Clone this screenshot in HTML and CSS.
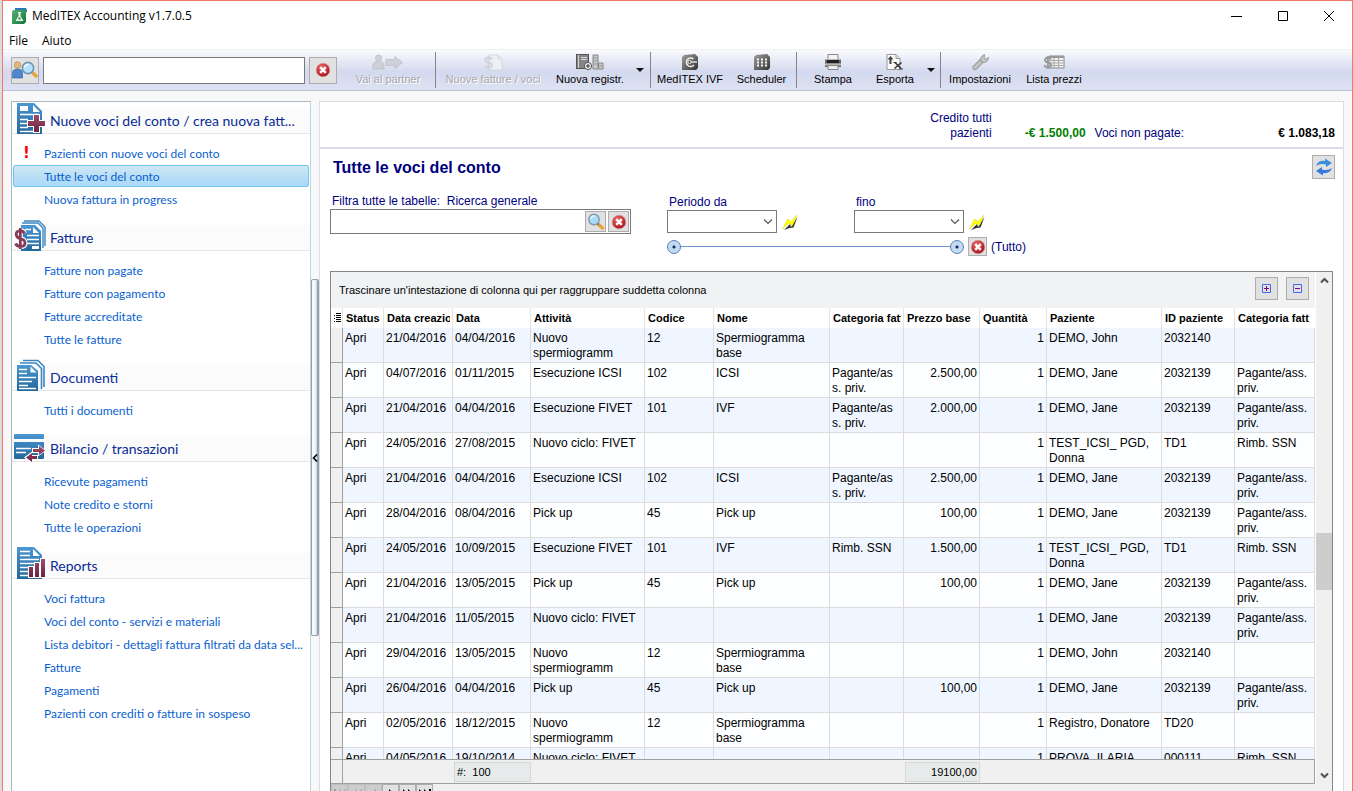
FILE: index.html
```html
<!DOCTYPE html>
<html lang="it">

<head>
    <meta charset="UTF-8">
    <meta name="viewport" content="width=device-width, initial-scale=1.0">
    <title>MedITEX Accounting v1.7.0.5</title>
    <link rel="stylesheet" href="styles.css">
</head>

<body>
    <svg width="0" height="0" class="defs">
        <defs>
            <linearGradient id="blue" x1="0" y1="0" x2="0" y2="1">
                <stop offset="0" stop-color="#4a97d2" />
                <stop offset="1" stop-color="#22679c" />
            </linearGradient>
            <linearGradient id="wine" x1="0" y1="0" x2="0" y2="1">
                <stop offset="0" stop-color="#a04c6c" />
                <stop offset="1" stop-color="#6c2440" />
            </linearGradient>
            <linearGradient id="gray" x1="0" y1="0" x2="1" y2="1">
                <stop offset="0" stop-color="#a0a0a0" />
                <stop offset="1" stop-color="#333" />
            </linearGradient>
            <linearGradient id="green" x1="0" y1="0" x2="1" y2="1">
                <stop offset="0" stop-color="#5fae74" />
                <stop offset="1" stop-color="#0d7a3a" />
            </linearGradient>
            <radialGradient id="red" cx="0.4" cy="0.3" r="0.7">
                <stop offset="0" stop-color="#ee6a6a" />
                <stop offset="1" stop-color="#b01018" />
            </radialGradient>
            <symbol id="i-cancel" viewBox="0 0 16 16">
                <circle cx="8" cy="8" r="6.8" fill="url(#red)" stroke="#c8a0a0" stroke-width="0.6" />
                <path d="M5.2 5.2l5.6 5.6M10.8 5.2l-5.6 5.6" stroke="#fff" stroke-width="2.4" />
            </symbol>
            <symbol id="i-search" viewBox="0 0 18 18">
                <path d="M11 11l4.500 4" stroke="#e8a33c" stroke-width="3.400" stroke-linecap="round" />
                <path d="M10 10l2 2" stroke="#888" stroke-width="2" />
                <circle cx="7" cy="6.500" r="5.200" fill="#a9dcf8" stroke="#8098ac" stroke-width="1.400" />
                <path d="M3.800 6a3.400 3.400 0 0 1 4-3" fill="none" stroke="#e8f8ff" stroke-width="1.400" />
            </symbol>
            <symbol id="i-flash" viewBox="0 0 16 16">
                <path d="M2 16l6-6 1 3 6.500-10-4 10.500-4 .5z" fill="#333" />
                <path d="M0.500 15L5.500 5l3.500 2.500L15 1l-4.500 10.500L6.500 9.500z" fill="#ffff00" stroke="#d0d000" stroke-width="0.400" />
            </symbol>
            <symbol id="i-chevron" viewBox="0 0 10 6">
                <path d="M1 0.500l4 4 4-4" fill="none" stroke="#555" stroke-width="1.200" />
            </symbol>
        </defs>
    </svg>

    <div class="window">
        <header class="titlebar">
            <svg class="app-icon" viewBox="0 0 16 16">
                <path d="M4 0h11l1 2v2H4z" fill="#2f78b8" />
                <path d="M2 2h13v12l-2 2H1V4z" fill="url(#green)" />
                <path d="M7 4h3v1l-.5.500v2.500l3 5H4.500l3-5V5.500L7 5z" fill="#e6f4ea" />
                <circle cx="8.500" cy="10.500" r="1.200" fill="#3f9459" />
            </svg>
            <span class="caption">MedITEX Accounting v1.7.0.5</span>
            <button class="win-btn" aria-label="Riduci"><svg viewBox="0 0 12 12"><path d="M0 6.500h11" /></svg></button>
            <button class="win-btn" aria-label="Ingrandisci"><svg viewBox="0 0 12 12"><path d="M1.500 1.500h9v9h-9z" /></svg></button>
            <button class="win-btn" aria-label="Chiudi"><svg viewBox="0 0 12 12"><path d="M1 1l10 10M11 1L1 11" /></svg></button>
        </header>

        <nav class="menubar">
            <a href="#">File</a>
            <a href="#">Aiuto</a>
        </nav>

        <div class="toolbar">
            <div class="patient-search">
                <button class="face" aria-label="Cerca paziente">
                    <svg width="26" height="18" viewBox="0 0 26 18">
                        <circle cx="5.500" cy="4" r="3.200" fill="#e8b878" stroke="#a08050" stroke-width="0.600" />
                        <path d="M0.500 17v-5q0-4 5-4t5 4v5z" fill="#4f86cc" stroke="#3060a0" stroke-width="0.600" />
                        <path d="M20 11l4 4" stroke="#e8a33c" stroke-width="3.400" stroke-linecap="round" />
                        <circle cx="16" cy="7" r="5.600" fill="#b4e2fa" stroke="#6f94b0" stroke-width="1.600" />
                        <path d="M12.800 6.500a3.400 3.400 0 0 1 4-3" fill="none" stroke="#fff" stroke-width="1.400" />
                    </svg>
                </button>
                <input type="text" aria-label="Paziente">
                <button class="face" aria-label="Cancella"><svg width="16" height="16"><use href="#i-cancel" /></svg></button>
            </div>
            <button class="tool partner" disabled>
                <svg width="32" height="17" viewBox="0 0 32 17">
                    <g fill="#cfd1d8" stroke="#b9bcc6" stroke-width="0.800">
                        <circle cx="6.500" cy="4" r="3" />
                        <path d="M1 15V11q0-3.500 5.500-3.500T12 11v4z" />
                        <path d="M14 5.500h9v-3l7.500 6-7.500 6v-3h-9z" />
                    </g>
                </svg>
                Vai al partner
            </button>
            <span class="sep"></span>
            <button class="tool invoices" disabled>
                <svg width="20" height="17" viewBox="0 0 20 17">
                    <path d="M6 1h9l4 4v11H6z" fill="#eef0f6" stroke="#d4d7e0" />
                    <path d="M15 1v4h4" fill="none" stroke="#d4d7e0" />
                    <path d="M9 5.500Q8 3.500 5.500 3.700 2 4 2.200 6.300q.3 1.700 3.300 2.200 3.500.5 3.500 2.800 0 2.200-3.500 2.200-3 0-3.800-2M5.500 2v13" fill="none" stroke="#d2d4dc" stroke-width="2" />
                </svg>
                Nuove fatture / voci
            </button>
            <button class="tool record">
                <svg width="28" height="17" viewBox="0 0 28 17">
                    <rect x="0.500" y="0.500" width="12" height="14" fill="#858585" stroke="#555" />
                    <path d="M2.500 1v13" stroke="#d0d0d0" />
                    <path d="M5 3.500h6M5 5.500h6" stroke="#ddd" />
                    <path d="M17 1h5v14h-5zM22.500 9h4.500v6h-4.500z" fill="#c9c9c9" stroke="#888" />
                    <path d="M17 4h5M17 7h5M17 10h5M23 12h4" stroke="#999" />
                    <circle cx="12" cy="12" r="3.600" fill="#eee" stroke="#555" />
                    <path d="M12 10v4M10 12h4" stroke="#333" />
                </svg>
                Nuova registr.
            </button>
            <button class="drop" aria-label="Altre registrazioni"></button>
            <span class="sep"></span>
            <button class="tool ivf">
                <svg width="16" height="16" viewBox="0 0 16 16">
                    <path d="M2 1l11-1 3 3v11l-2 2H0V3z" fill="url(#gray)" />
                    <path d="M11.500 5A4.300 4.300 0 1 0 12 11" fill="none" stroke="#eee" stroke-width="1.500" />
                    <path d="M7 8h8" stroke="#eee" stroke-width="1.300" />
                    <circle cx="7.500" cy="8" r="1.600" fill="#444" stroke="#eee" />
                </svg>
                MedITEX IVF
            </button>
            <button class="tool scheduler">
                <svg width="16" height="16" viewBox="0 0 16 16">
                    <path d="M2 1l11-1 3 3v11l-2 2H0V3z" fill="url(#gray)" />
                    <path d="M3 5.500h2M7 5.500h2M11 5.500h2M3 8.500h2M7 8.500h2M11 8.500h2M3 11.500h2M7 11.500h2M11 11.500h2" stroke="#f2f2f2" stroke-width="2" />
                </svg>
                Scheduler
            </button>
            <span class="sep"></span>
            <button class="tool print">
                <svg width="18" height="16" viewBox="0 0 18 16">
                    <path d="M4 0.500h10V6H4z" fill="#f4f4f4" stroke="#888" />
                    <path d="M1 5.500h2V8h12V5.500h2V13H1z" fill="#6a6a6a" />
                    <path d="M3 6h12v3H3z" fill="#222" />
                    <path d="M1 9.500h16v2H1z" fill="#b8b8b8" />
                    <path d="M4 11.500h10v4H4z" fill="#eee" stroke="#888" />
                </svg>
                Stampa
            </button>
            <button class="tool export">
                <svg width="18" height="16" viewBox="0 0 18 16">
                    <path d="M1 0.500h9l4 4v11H1z" fill="#fafafa" stroke="#999" />
                    <path d="M10 0.500v4h4" fill="#ddd" stroke="#999" />
                    <path d="M4.500 10V5" stroke="#444" stroke-width="2" />
                    <path d="M1.500 5.500L4.500 2l3 3.500z" fill="#444" />
                    <path d="M9 8.500l6 6M15.500 8.500l-7 6" stroke="#333" stroke-width="1.600" />
                    <path d="M7.500 8.500h3M13 15h4" stroke="#333" />
                </svg>
                Esporta
            </button>
            <button class="drop last" aria-label="Altre esportazioni"></button>
            <span class="sep"></span>
            <button class="tool settings">
                <svg width="17" height="16" viewBox="0 0 17 16">
                    <path d="M3 13.500L9.500 7" stroke="#888" stroke-width="5" stroke-linecap="round" />
                    <path d="M3 13.500L9.500 7" stroke="#c4c4c4" stroke-width="3.400" stroke-linecap="round" />
                    <path d="M9 7Q8 2.500 12.500 0.500L12 4l2 1.200 2.500-1.700Q16 8.500 11 8.500z" fill="#c8c8c8" stroke="#888" stroke-width="0.800" />
                </svg>
                Impostazioni
            </button>
            <button class="tool prices">
                <svg width="22" height="16" viewBox="0 0 22 16">
                    <path d="M6 2h15v12H6z" fill="#f2f2f2" stroke="#888" />
                    <path d="M6 3h15" stroke="#999" stroke-width="2" />
                    <path d="M7 6.500h13M7 9h13M7 11.500h13M11 4v10M15.500 4v10" stroke="#aaa" />
                    <path d="M8 5.500Q7 3.500 4.800 3.700 2 4 2 6.100 2.200 8 4.800 8.500 8 9 8 11.200 8 13.300 4.800 13.300 2 13.300 1.200 11M4.800 2v13" fill="none" stroke="#999" stroke-width="1.800" />
                </svg>
                Lista prezzi
            </button>
        </div>

        <div class="workspace">
            <aside class="sidebar">
                <section>
                    <h2>
                        <svg viewBox="0 0 32 32">
                            <path d="M3 1h17l8 8v23H3z" fill="url(#blue)" />
                            <path d="M6 4h8v5H6zM19 3v7h7z" fill="#fff" />
                            <path d="M6 12.500h19M6 17.500h8M6 21.500h7M6 25.500h8M6 29.500h19" stroke="#fff" stroke-width="1.600" />
                            <path d="M19 12h7v6h6v7h-6v6h-7v-6h-6v-7h6z" fill="#fff" />
                            <path d="M20 13h5v6h6v5h-6v6h-5v-6h-6v-5h6z" fill="url(#wine)" />
                        </svg>
                        <span>Nuove voci del conto / crea nuova fatt...</span>
                    </h2>
                    <ul>
                        <li><a href="#"><b class="alert">!</b>Pazienti con nuove voci del conto</a></li>
                        <li><a href="#" class="selected">Tutte le voci del conto</a></li>
                        <li><a href="#">Nuova fattura in progress</a></li>
                    </ul>
                </section>
                <section>
                    <h2>
                        <svg viewBox="0 0 32 32">
                            <path d="M10 2h15l6 6v19M8 4h16l5 5v20" fill="none" stroke="#3c86c0" stroke-width="1.400" />
                            <path d="M7 6h14l6 6v20H7z" fill="url(#blue)" />
                            <path d="M19 8v6h6z" fill="#fff" />
                            <path d="M11 10.500h6M13 16.500h12M13 20.500h12M13 24.500h12" stroke="#fff" stroke-width="1.600" />
                            <path d="M18 27h7v3h-7z" fill="#fff" />
                            <path d="M10.500 14.500Q9 11.500 6 11.800 2 12 2.200 15.500 2.500 18.500 6 19.500 11 20.500 11 24 11 27.500 6.500 27.500 3 27.500 1.500 24.500M6.300 9v21" fill="none" stroke="#fff" stroke-width="5" />
                            <path d="M10.500 14.500Q9 11.500 6 11.800 2 12 2.200 15.500 2.500 18.500 6 19.500 11 20.500 11 24 11 27.500 6.500 27.500 3 27.500 1.500 24.500M6.300 9v21" fill="none" stroke="#873a58" stroke-width="2.800" />
                        </svg>
                        <span>Fatture</span>
                    </h2>
                    <ul>
                        <li><a href="#">Fatture non pagate</a></li>
                        <li><a href="#">Fatture con pagamento</a></li>
                        <li><a href="#">Fatture accreditate</a></li>
                        <li><a href="#">Tutte le fatture</a></li>
                    </ul>
                </section>
                <section>
                    <h2>
                        <svg viewBox="0 0 32 32">
                            <path d="M9 1.500h15l6 6V28M6 4h16l5.500 5.500V30" fill="none" stroke="#3c86c0" stroke-width="1.600" />
                            <path d="M3 6h14l7 6v20H3z" fill="url(#blue)" />
                            <path d="M16.500 7.500v6h6z" fill="#fff" />
                            <path d="M5 10.500h8M5 14.500h8M5 18.500h17M5 22.500h13M5 26.500h9M5 29.500h17" stroke="#fff" stroke-width="1.500" />
                        </svg>
                        <span>Documenti</span>
                    </h2>
                    <ul>
                        <li><a href="#">Tutti i documenti</a></li>
                    </ul>
                </section>
                <section>
                    <h2>
                        <svg viewBox="0 0 32 32">
                            <path d="M0 5q0-1 1-1h28q1 0 1 1v4H0zM0 12h30v16q0 1-1 1H1q-1 0-1-1z" fill="url(#blue)" />
                            <path d="M2 18.500h15M2 22.500h10" stroke="#fff" stroke-width="1.600" />
                            <path d="M18 18h6v-3.500l8 6-8 6V23h-6zM24 25h-6v-3.500l-8 6 8 6V30h6z" fill="#fff" />
                            <path d="M19 19h6v-3l6 4.500-6 4.500v-3h-6zM23 26h-5v-3l-6 4.500 6 4.500v-3h5z" fill="url(#wine)" />
                        </svg>
                        <span>Bilancio / transazioni</span>
                    </h2>
                    <ul>
                        <li><a href="#">Ricevute pagamenti</a></li>
                        <li><a href="#">Note credito e storni</a></li>
                        <li><a href="#">Tutte le operazioni</a></li>
                    </ul>
                </section>
                <section>
                    <h2>
                        <svg viewBox="0 0 32 32">
                            <path d="M3 0h17l8 8v24H3z" fill="url(#blue)" />
                            <path d="M19 2v7h7z" fill="#fff" />
                            <path d="M6 4.500h10M6 8.500h10M6 12.500h19M6 16.500h15M6 20.500h9M6 24.500h8M6 28.500h8" stroke="#fff" stroke-width="1.600" />
                            <path d="M14 19h6v-4h6v-4h6v20H14z" fill="#fff" />
                            <path d="M15 20h4v10h-4zM21 16h4v14h-4zM27 12h4v18h-4z" fill="url(#wine)" />
                        </svg>
                        <span>Reports</span>
                    </h2>
                    <ul>
                        <li><a href="#">Voci fattura</a></li>
                        <li><a href="#">Voci del conto - servizi e materiali</a></li>
                        <li><a href="#">Lista debitori - dettagli fattura filtrati da data sel...</a></li>
                        <li><a href="#">Fatture</a></li>
                        <li><a href="#">Pagamenti</a></li>
                        <li><a href="#">Pazienti con crediti o fatture in sospeso</a></li>
                    </ul>
                </section>
            </aside>

            <div class="splitter">
                <button aria-label="Nascondi pannello">
                    <svg width="6" height="8" viewBox="0 0 6 8"><path d="M5 0.500L1.500 4 5 7.500" fill="none" stroke="#000" stroke-width="1.600" /></svg>
                </button>
            </div>

            <main>
                <div class="totals">
                    <span class="credit-label">Credito tutti pazienti</span>
                    <b class="credit">-€ 1.500,00</b>
                    <span class="unpaid-label">Voci non pagate:</span>
                    <b class="unpaid">€ 1.083,18</b>
                </div>

                <div class="heading">
                    <h1>Tutte le voci del conto</h1>
                    <button class="face refresh" aria-label="Aggiorna">
                        <svg width="18" height="18" viewBox="0 0 18 18">
                            <path d="M1 8Q3 2 10 3V0.500L17 5l-6 4V6.500Q5 5 1 8z" fill="#3a8fdc" />
                            <path d="M17 10q-2 6-9 5v2.500L1 13l6-4v2.500q6 1.500 10-1.500z" fill="#3a78dc" />
                        </svg>
                    </button>
                </div>

                <div class="filters">
                    <div class="general">
                        <label for="general">Filtra tutte le tabelle:&nbsp; Ricerca generale</label>
                        <div class="combo">
                            <input type="text" id="general">
                            <button class="face" aria-label="Cerca"><svg width="18" height="18"><use href="#i-search" /></svg></button>
                            <button class="face" aria-label="Cancella filtro"><svg width="16" height="16"><use href="#i-cancel" /></svg></button>
                        </div>
                    </div>
                    <div class="period">
                        <div class="dates">
                            <div class="date">
                                <label for="from">Periodo da</label>
                                <div class="pick">
                                    <select id="from"><option></option></select>
                                    <svg class="chevron" width="10" height="6"><use href="#i-chevron" /></svg>
                                </div>
                            </div>
                            <svg class="flash" width="16" height="16"><use href="#i-flash" /></svg>
                            <div class="date">
                                <label for="to">fino</label>
                                <div class="pick">
                                    <select id="to"><option></option></select>
                                    <svg class="chevron" width="10" height="6"><use href="#i-chevron" /></svg>
                                </div>
                            </div>
                            <svg class="flash" width="16" height="16"><use href="#i-flash" /></svg>
                        </div>
                        <div class="span">
                            <div class="slider">
                                <input type="range" min="0" max="100" value="0" aria-label="Inizio periodo">
                                <input type="range" min="0" max="100" value="100" aria-label="Fine periodo">
                            </div>
                            <button class="face" aria-label="Azzera periodo"><svg width="16" height="16"><use href="#i-cancel" /></svg></button>
                            <span>(Tutto)</span>
                        </div>
                    </div>
                </div>

                <div class="grid">
                    <div class="grid-view">
                        <div class="grid-main">
                            <div class="group-panel">
                                <span>Trascinare un'intestazione di colonna qui per raggruppare suddetta colonna</span>
                                <button class="face" aria-label="Espandi tutto">
                                    <svg width="9" height="9" viewBox="0 0 9 9"><path d="M0.500 0.500h8v8h-8z" fill="none" stroke="#4868e8" /><path d="M2 4.500h5M4.500 2v5" stroke="#800080" /></svg>
                                </button>
                                <button class="face" aria-label="Comprimi tutto">
                                    <svg width="9" height="9" viewBox="0 0 9 9"><path d="M0.500 0.500h8v8h-8z" fill="none" stroke="#4868e8" /><path d="M2 4.500h5" stroke="#800080" /></svg>
                                </button>
                            </div>
                            <div class="rows">
                                <table>
                                    <colgroup>
                                        <col class="c-mark"><col class="c-status"><col class="c-created"><col class="c-date"><col class="c-activity"><col class="c-code"><col class="c-name"><col class="c-cat"><col class="c-price"><col class="c-qty"><col class="c-patient"><col class="c-id"><col class="c-cat2">
                                    </colgroup>
                                    <thead>
                                        <tr>
                                            <th><svg width="7" height="10" viewBox="0 0 7 10"><path d="M0 2.500h1M0 5.500h1M0 8.500h1M2 0.500h5M2 2.500h5M2 4.500h5M2 6.500h5M2 8.500h5" stroke="#000" /></svg></th>
                                            <th>Status</th>
                                            <th><div class="clip">Data creazione</div></th>
                                            <th>Data</th>
                                            <th>Attività</th>
                                            <th>Codice</th>
                                            <th>Nome</th>
                                            <th><div class="clip">Categoria fatt</div></th>
                                            <th>Prezzo base</th>
                                            <th>Quantità</th>
                                            <th>Paziente</th>
                                            <th>ID paziente</th>
                                            <th>Categoria fatt</th>
                                        </tr>
                                    </thead>
                                    <tbody>
                                        <tr><td></td><td>Apri</td><td>21/04/2016</td><td>04/04/2016</td><td>Nuovo<br>spermiogramm</td><td>12</td><td>Spermiogramma<br>base</td><td></td><td></td><td>1</td><td>DEMO, John</td><td>2032140</td><td></td></tr>
                                        <tr><td></td><td>Apri</td><td>04/07/2016</td><td>01/11/2015</td><td>Esecuzione ICSI</td><td>102</td><td>ICSI</td><td>Pagante/as<br>s. priv.</td><td>2.500,00</td><td>1</td><td>DEMO, Jane</td><td>2032139</td><td>Pagante/ass.<br>priv.</td></tr>
                                        <tr><td></td><td>Apri</td><td>21/04/2016</td><td>04/04/2016</td><td>Esecuzione FIVET</td><td>101</td><td>IVF</td><td>Pagante/as<br>s. priv.</td><td>2.000,00</td><td>1</td><td>DEMO, Jane</td><td>2032139</td><td>Pagante/ass.<br>priv.</td></tr>
                                        <tr><td></td><td>Apri</td><td>24/05/2016</td><td>27/08/2015</td><td>Nuovo ciclo: FIVET</td><td></td><td></td><td></td><td></td><td>1</td><td>TEST_ICSI_ PGD,<br>Donna</td><td>TD1</td><td>Rimb. SSN</td></tr>
                                        <tr><td></td><td>Apri</td><td>21/04/2016</td><td>04/04/2016</td><td>Esecuzione ICSI</td><td>102</td><td>ICSI</td><td>Pagante/as<br>s. priv.</td><td>2.500,00</td><td>1</td><td>DEMO, Jane</td><td>2032139</td><td>Pagante/ass.<br>priv.</td></tr>
                                        <tr><td></td><td>Apri</td><td>28/04/2016</td><td>08/04/2016</td><td>Pick up</td><td>45</td><td>Pick up</td><td></td><td>100,00</td><td>1</td><td>DEMO, Jane</td><td>2032139</td><td>Pagante/ass.<br>priv.</td></tr>
                                        <tr><td></td><td>Apri</td><td>24/05/2016</td><td>10/09/2015</td><td>Esecuzione FIVET</td><td>101</td><td>IVF</td><td>Rimb. SSN</td><td>1.500,00</td><td>1</td><td>TEST_ICSI_ PGD,<br>Donna</td><td>TD1</td><td>Rimb. SSN</td></tr>
                                        <tr><td></td><td>Apri</td><td>21/04/2016</td><td>13/05/2015</td><td>Pick up</td><td>45</td><td>Pick up</td><td></td><td>100,00</td><td>1</td><td>DEMO, Jane</td><td>2032139</td><td>Pagante/ass.<br>priv.</td></tr>
                                        <tr><td></td><td>Apri</td><td>21/04/2016</td><td>11/05/2015</td><td>Nuovo ciclo: FIVET</td><td></td><td></td><td></td><td></td><td>1</td><td>DEMO, Jane</td><td>2032139</td><td>Pagante/ass.<br>priv.</td></tr>
                                        <tr><td></td><td>Apri</td><td>29/04/2016</td><td>13/05/2015</td><td>Nuovo<br>spermiogramm</td><td>12</td><td>Spermiogramma<br>base</td><td></td><td></td><td>1</td><td>DEMO, John</td><td>2032140</td><td></td></tr>
                                        <tr><td></td><td>Apri</td><td>26/04/2016</td><td>04/04/2016</td><td>Pick up</td><td>45</td><td>Pick up</td><td></td><td>100,00</td><td>1</td><td>DEMO, Jane</td><td>2032139</td><td>Pagante/ass.<br>priv.</td></tr>
                                        <tr><td></td><td>Apri</td><td>02/05/2016</td><td>18/12/2015</td><td>Nuovo<br>spermiogramm</td><td>12</td><td>Spermiogramma<br>base</td><td></td><td></td><td>1</td><td>Registro, Donatore</td><td>TD20</td><td></td></tr>
                                        <tr><td></td><td>Apri</td><td>04/05/2016</td><td>19/10/2014</td><td>Nuovo ciclo: FIVET</td><td></td><td></td><td></td><td></td><td>1</td><td>PROVA, ILARIA</td><td>000111</td><td>Rimb. SSN</td></tr>
                                    </tbody>
                                </table>
                            </div>
                            <table class="sums">
                                <colgroup>
                                    <col class="c-mark"><col class="c-status"><col class="c-created"><col class="c-date"><col class="c-activity"><col class="c-code"><col class="c-name"><col class="c-cat"><col class="c-price"><col class="c-qty"><col class="c-patient"><col class="c-id"><col class="c-cat2">
                                </colgroup>
                                <tr>
                                    <td></td><td></td><td></td>
                                    <td><div class="sum">#:&nbsp; 100</div></td>
                                    <td></td><td></td><td></td><td></td>
                                    <td><div class="sum total">19100,00</div></td>
                                    <td></td><td></td><td></td><td></td>
                                </tr>
                            </table>
                        </div>
                        <div class="scrollbar">
                            <button aria-label="Su"><svg width="9" height="7" viewBox="0 0 9 7"><path d="M1 5.500l3.500-3.500L8 5.500" /></svg></button>
                            <span class="above"></span>
                            <span class="thumb"></span>
                            <span class="below"></span>
                            <button aria-label="Giù"><svg width="9" height="7" viewBox="0 0 9 7"><path d="M1 1.500L4.500 5 8 1.500" /></svg></button>
                        </div>
                    </div>
                    <div class="navigator">
                        <button disabled aria-label="Primo"><svg viewBox="0 0 12 8"><path d="M0 0h2v8H0zM7 0v8L3 4zM12 0v8L8 4z" /></svg></button>
                        <button disabled aria-label="Pagina precedente"><svg viewBox="0 0 12 8"><path d="M6 0v8L2 4zM11 0v8L7 4z" /></svg></button>
                        <button disabled aria-label="Precedente"><svg viewBox="0 0 12 8"><path d="M8 0v8L4 4z" /></svg></button>
                        <button aria-label="Successivo"><svg viewBox="0 0 12 8"><path d="M4 0v8l4-4z" /></svg></button>
                        <button aria-label="Pagina successiva"><svg viewBox="0 0 12 8"><path d="M1 0v8l4-4zM6 0v8l4-4z" /></svg></button>
                        <button aria-label="Ultimo"><svg viewBox="0 0 12 8"><path d="M0 0v8l4-4zM5 0v8l4-4zM10 0h2v8h-2z" /></svg></button>
                    </div>
                </div>
            </main>
        </div>
    </div>
</body>

</html>
```

FILE: styles.css
```css
* {
    box-sizing: border-box;
}

html,
body {
    height: 100%;
    overflow: hidden;
}

body {
    margin: 0;
    background-color: #dcdcdc;
    font-family: "Liberation Sans", Arial, sans-serif;
    font-size: 12px;
    color: #000;
}

button,
input,
select {
    font: inherit;
    color: inherit;
    margin: 0;
    padding: 0;
    border-radius: 0;
}

svg {
    display: block;
    flex: none;
}

.defs {
    position: absolute;
}

/* window frame: the last rows run below the screen edge */
.window {
    display: flex;
    flex-direction: column;
    height: calc(100vh + 11px);
    margin-left: 2px;
    border: 1px solid #f4776c;
    background-color: #f8f8f8;
}

.titlebar {
    display: flex;
    align-items: center;
    height: 29px;
    padding-left: 8px;
    background-color: #fff;
    font-family: "Open Sans", sans-serif;
}

.app-icon {
    width: 16px;
    height: 16px;
}

.caption {
    flex: 1;
    padding-left: 5px;
}

.win-btn {
    width: 46px;
    height: 29px;
    border: 0;
    background: none;
    display: flex;
    align-items: center;
    justify-content: center;
}

.win-btn svg {
    width: 12px;
    height: 12px;
    fill: none;
    stroke: #000;
}

.menubar {
    display: flex;
    gap: 14px;
    height: 20px;
    padding-left: 6px;
    border-bottom: 1px solid #f0f0f0;
    background-color: #fff;
    font-family: "Open Sans", sans-serif;
    line-height: 22px;
}

.menubar a {
    color: #000;
    text-decoration: none;
}

.face {
    display: flex;
    align-items: center;
    justify-content: center;
    border: 1px solid #adadad;
    background-color: #e1e1e1;
}

/* toolbar */
.toolbar {
    display: flex;
    align-items: center;
    height: 41px;
    border-bottom: 1px solid #b9c0d8;
    background: linear-gradient(#fafbfe, #d3d9ee 55%, #dce1f2);
    font-size: 11px;
}

.patient-search {
    display: flex;
    gap: 4px;
    width: 338px;
    padding-left: 8px;
}

.patient-search .face {
    width: 28px;
    height: 27px;
}

.patient-search input {
    width: 262px;
    height: 27px;
    border: 1px solid #7a7a7a;
}

.tool {
    display: flex;
    flex-direction: column;
    align-items: center;
    justify-content: space-between;
    height: 32px;
    border: 0;
    background: none;
    line-height: 13px;
    white-space: nowrap;
}

.tool:disabled {
    color: #a8a8a8;
    text-shadow: 1px 1px #fff;
}

.partner {
    width: 94px;
}

.invoices {
    width: 114px;
}

.record {
    width: 80px;
}

.ivf,
.settings {
    width: 78px;
}

.scheduler {
    width: 67px;
    padding-right: 2px;
}

.print {
    width: 72px;
}

.export {
    width: 52px;
}

.prices {
    width: 70px;
}

.sep {
    width: 1px;
    height: 36px;
    background-color: #85858c;
}

.drop {
    width: 20px;
    height: 32px;
    border: 0;
    background: none;
}

.drop.last {
    width: 19px;
}

.drop::before {
    content: "";
    display: block;
    width: 0;
    margin: 0 auto;
    border: 4px solid transparent;
    border-top-color: #111;
    border-bottom: 0;
}

/* sidebar */
.workspace {
    flex: 1;
    min-height: 0;
    display: flex;
    padding: 10px 8px 0;
}

.sidebar {
    width: 300px;
    flex: none;
    border: 1px solid #a9b8c4;
    border-right-color: #b9d6e4;
    border-bottom: 0;
    background-color: #fff;
    font-family: Lato, "Open Sans", sans-serif;
}

.sidebar h2 {
    display: flex;
    align-items: center;
    height: 32px;
    margin: 0;
    padding-left: 2px;
    border-bottom: 1px solid #e6e6e6;
    background: linear-gradient(#fff 6px, #fbfbfb 6px);
    color: #0a2a96;
    font-size: 14px;
    font-weight: normal;
    white-space: nowrap;
}

.sidebar section + section h2 {
    margin-top: 8px;
}

.sidebar h2 svg {
    width: 32px;
    height: 32px;
    overflow: visible;
}

.sidebar h2 span {
    padding: 6px 0 0 4px;
}

.sidebar ul {
    margin: 0;
    padding: 8px 1px 0;
    list-style: none;
}

.sidebar li {
    height: 23px;
}

.sidebar li a {
    display: block;
    height: 22px;
    padding-left: 30px;
    border: 1px solid transparent;
    border-radius: 2px;
    color: #0a5fd0;
    line-height: 21px;
    text-decoration: none;
    white-space: nowrap;
}

.sidebar li a.selected {
    border-color: #74c4ee;
    background: linear-gradient(#cfe8f3, #b2dcf6 70%, #a9dbfa);
}

.alert {
    display: inline-block;
    width: 21px;
    margin-left: -21px;
    color: #f00;
    font-family: "DejaVu Sans", sans-serif;
    font-size: 15px;
    line-height: 16px;
}

.splitter {
    display: flex;
    flex-direction: column;
    width: 8px;
    flex: none;
}

.splitter::before {
    content: "";
    flex: 178;
}

.splitter::after {
    content: "";
    flex: 165;
}

.splitter button {
    display: flex;
    align-items: center;
    height: 357px;
    border: 1px solid #98a0a8;
    border-right-width: 2px;
    border-radius: 2px;
    background: linear-gradient(90deg, #f8f8f8 50%, #b8dcec);
}

/* main area */
main {
    flex: 1;
    min-width: 0;
    display: flex;
    flex-direction: column;
    border: 1px solid #dcdce4;
    border-bottom: 0;
    background-color: #fff;
    color: #000080;
}

.totals {
    display: flex;
    justify-content: flex-end;
    align-items: flex-end;
    height: 47px;
    padding: 0 8px 6px;
    border-bottom: 2px solid #dcdce4;
    line-height: 15px;
}

.credit-label {
    width: 72px;
    text-align: right;
}

.credit {
    width: 94px;
    color: #008000;
    text-align: right;
}

.unpaid-label {
    padding-left: 9px;
}

.unpaid {
    width: 151px;
    color: #000;
    text-align: right;
}

.heading {
    display: flex;
    justify-content: space-between;
    align-items: flex-start;
    padding: 6px 8px 0 13px;
}

h1 {
    margin: 0;
    padding-top: 3px;
    font-size: 16px;
    line-height: 20px;
}

.refresh {
    width: 23px;
    height: 24px;
}

.filters {
    display: flex;
    gap: 36px;
    padding: 14px 10px 0;
}

.filters label {
    display: block;
    height: 16px;
    padding-left: 2px;
    line-height: 16px;
}

.combo {
    display: flex;
    align-items: center;
    gap: 2px;
    width: 301px;
    height: 25px;
    padding-right: 1px;
    border: 1px solid #7a7a7a;
}

.combo input {
    flex: 1;
    min-width: 0;
    border: 0;
}

.combo .face {
    width: 21px;
    height: 21px;
}

.dates {
    display: flex;
    align-items: flex-end;
}

.date label {
    height: 17px;
    line-height: 18px;
}

.pick {
    position: relative;
}

.pick select {
    display: block;
    width: 110px;
    height: 23px;
    border: 1px solid #7a7a7a;
    background-color: #fff;
    appearance: none;
}

.chevron {
    position: absolute;
    right: 4px;
    top: 9px;
    pointer-events: none;
}

.flash {
    margin: 0 56px 3px 5px;
}

.span {
    display: flex;
    align-items: center;
    gap: 4px;
    padding-top: 4px;
}

.span .face {
    width: 19px;
    height: 19px;
}

.slider {
    display: grid;
    align-items: center;
    width: 297px;
    height: 19px;
    background: linear-gradient(#6f94cc, #6f94cc) center / 283px 1px no-repeat;
}

.slider input {
    grid-area: 1 / 1;
    width: 100%;
    height: 14px;
    background: none;
    appearance: none;
    pointer-events: none;
}

.slider input::-webkit-slider-thumb {
    appearance: none;
    width: 14px;
    height: 14px;
    border: 1px solid #5480b4;
    border-radius: 50%;
    background: radial-gradient(circle, #103060 1px, #c4daf2 2px);
    pointer-events: auto;
}

/* grid */
.grid {
    flex: 1;
    min-height: 0;
    display: flex;
    flex-direction: column;
    margin: 15px 10px 0;
    border: 1px solid #82878f;
    border-bottom: 0;
    background-color: #f0f0f0;
    color: #000;
}

.grid-view {
    flex: 1;
    min-height: 0;
    display: flex;
}

.grid-main {
    flex: 1;
    min-width: 0;
    display: flex;
    flex-direction: column;
}

.group-panel {
    display: flex;
    align-items: center;
    gap: 8px;
    height: 36px;
    padding: 0 6px 3px 8px;
    background-color: #f1f2f4;
    font-size: 11px;
}

.group-panel span {
    flex: 1;
    padding-top: 3px;
}

.group-panel .face {
    width: 23px;
    height: 23px;
}

.rows {
    flex: 1;
    min-height: 0;
    overflow: hidden;
}

table {
    width: 100%;
    table-layout: fixed;
    border-collapse: separate;
    border-spacing: 0;
}

.c-mark {
    width: 12px;
}

.c-status {
    width: 41px;
}

.c-created,
.c-code {
    width: 69px;
}

.c-date {
    width: 78px;
}

.c-activity {
    width: 114px;
}

.c-name {
    width: 116px;
}

.c-cat {
    width: 74px;
}

.c-price {
    width: 76px;
}

.c-qty {
    width: 67px;
}

.c-patient {
    width: 115px;
}

.c-id {
    width: 73px;
}

.c-cat2 {
    width: 80px;
}

th {
    height: 20px;
    padding: 0 2px 0 3px;
    border-right: 1px solid #e4e4e4;
    background-color: #fff;
    font-size: 11px;
    text-align: left;
    white-space: nowrap;
    overflow: hidden;
}

th:first-child {
    padding-right: 0;
}

th:last-child {
    border-right: 0;
}

.clip {
    overflow: hidden;
}

tbody td {
    height: 35px;
    padding: 3px 2px 1px;
    border-right: 1px solid #dcdcdc;
    border-bottom: 1px solid #dcdcdc;
    background-color: #fdfeff;
    line-height: 15px;
    vertical-align: top;
    white-space: nowrap;
    overflow: hidden;
}

.rows tr:nth-child(odd) td {
    background-color: #eff6ff;
}

.rows tbody td:first-child {
    border-color: #a0a0a0;
    background-color: #f0f0f0;
}

.rows td:nth-child(9),
.rows td:nth-child(10) {
    text-align: right;
}

.sums {
    border-top: 1px solid #a0a0a0;
    border-bottom: 1px solid #a0a0a0;
    font-size: 11px;
}

.sums td {
    height: 23px;
    padding: 1px 0 0 1px;
    border: 0;
    background-color: #f0f0f0;
    vertical-align: middle;
}

.sums td:first-child,
.sums td:last-child {
    border-right: 1px solid #a0a0a0;
}

.sum {
    height: 20px;
    padding: 0 2px;
    border: 1px solid #d4d8d8;
    background-color: #e6eaea;
    line-height: 18px;
}

.total {
    text-align: right;
}

.scrollbar {
    display: flex;
    flex-direction: column;
    width: 17px;
    border-left: 1px solid #fff;
}

.scrollbar button {
    display: flex;
    align-items: center;
    justify-content: center;
    height: 17px;
    border: 0;
    background: none;
}

.scrollbar path {
    fill: none;
    stroke: #505050;
    stroke-width: 2;
}

.above {
    flex: 244;
}

.thumb {
    height: 57px;
    background-color: #cdcdcd;
}

.below {
    flex: 177;
}

.navigator {
    display: flex;
    height: 17px;
}

.navigator button {
    display: flex;
    align-items: center;
    justify-content: center;
    width: 17px;
    border: 1px solid #adadad;
    background-color: #e1e1e1;
}

.navigator button:disabled {
    border-color: #bfbfbf;
    background-color: #ccc;
}

.navigator svg {
    width: 12px;
    height: 8px;
}

.navigator button:disabled svg {
    fill: #a0a0a0;
}
```
